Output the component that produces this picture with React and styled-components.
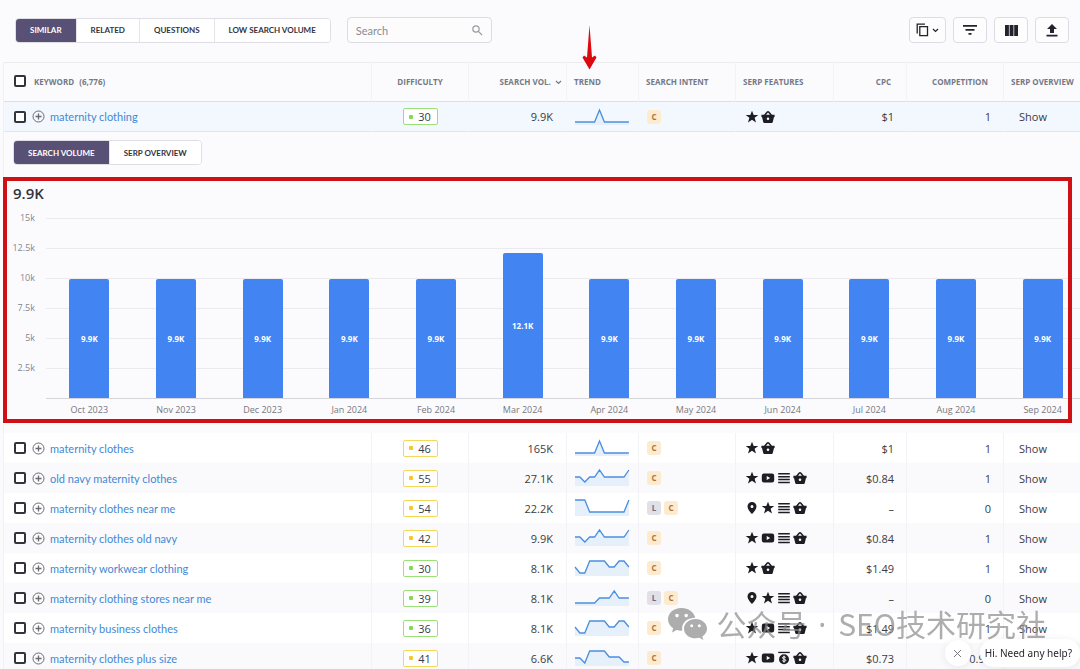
import React from "react";
import styled, { createGlobalStyle, css } from "styled-components";

const Global = createGlobalStyle`
  *, *::before, *::after { box-sizing: border-box; }
  body { margin: 0; background: #fbfbfd; color: #3b3b45; font-family: "Open Sans", "Noto Sans", sans-serif; font-size: 11px; }
  button, input { font: inherit; color: inherit; margin: 0; }
`;

const Page = styled.main`
  height: 100vh;
  overflow: hidden;
  padding-left: 3px;
`;

const Toolbar = styled.header`
  display: flex;
  align-items: center;
  gap: 16px;
  height: 62px;
  padding: 0 11px 2px 12px;
`;

const Segments = styled.div`
  display: flex;
  width: max-content;
  height: 25px;
  border: 1px solid #dedee4;
  border-radius: 4px;
  background: #fff;
  overflow: hidden;
`;

const Segment = styled.button`
  border: 0;
  border-right: 1px solid #e4e4ea;
  padding: 0 14px;
  background: ${(p) => (p.$active ? "#585075" : "#fff")};
  color: ${(p) => (p.$active ? "#fff" : "#33333d")};
  font-family: Lato, sans-serif;
  font-size: 8px;
  font-weight: 700;
  white-space: nowrap;
  &:last-child { border-right: 0; }
`;

const SearchBox = styled.label`
  display: flex;
  align-items: center;
  width: 145px;
  height: 26px;
  padding: 0 8px;
  border: 1px solid #dcdce2;
  border-radius: 4px;
  background: #fcfcfd;
  color: #9a9aa2;
  input {
    flex: 1;
    min-width: 0;
    border: 0;
    padding: 0;
    outline: 0;
    background: none;
    font-family: Lato, sans-serif;
    font-size: 11px;
  }
  input::placeholder { color: #8b8b93; opacity: 1; }
`;

const Tools = styled.div`
  display: flex;
  gap: 7px;
  margin-left: auto;
`;

const ToolButton = styled.button`
  display: flex;
  align-items: center;
  justify-content: center;
  gap: 3px;
  width: ${(p) => (p.$wide ? "37px" : "34px")};
  height: 26px;
  padding: 0;
  border: 1px solid #dcdce4;
  border-radius: 4px;
  background: #fdfdfe;
  color: #23232d;
`;

const Table = styled.table`
  width: calc(100% + 6px);
  table-layout: fixed;
  border-collapse: separate;
  border-spacing: 0;
  border-left: 1px solid #f1f1f5;
`;

const Th = styled.th`
  height: 40px;
  padding: 0 ${(p) => p.$right || 7}px 2px 7px;
  border-top: 1px solid #ebecf0;
  border-bottom: 1px solid #d3e2ee;
  border-right: 1px solid #f3f3f7;
  text-align: ${(p) => p.$align || "left"};
  color: #757987;
  font-size: 8px;
  font-weight: 700;
  white-space: nowrap;
`;

const Td = styled.td`
  height: 30px;
  padding: 0 ${(p) => p.$right || 7}px 0 ${(p) => p.$left || 7}px;
  border-right: 1px solid #f3f3f7;
  text-align: ${(p) => p.$align || "left"};
  white-space: nowrap;
`;

const Row = styled.tr`
  background: ${(p) => (p.$striped ? "#fafafc" : "#fff")};
  ${(p) =>
    p.$open &&
    css`
      background: #f2f8fe;
      td { border-right-color: transparent; border-bottom: 1px solid #dde8f2; }
    `}
`;

const KeywordLine = styled.div`
  display: flex;
  align-items: center;
  padding-left: 3px;
`;

const Check = styled.input.attrs({ type: "checkbox" })`
  appearance: none;
  flex: none;
  width: 12px;
  height: 12px;
  border: 2px solid #34343e;
  border-radius: 2px;
  background: #fff;
`;

const AddButton = styled.button`
  display: flex;
  margin: 0 5px 0 6px;
  padding: 0;
  border: 0;
  background: none;
  color: #6a6a72;
`;

const KeywordLink = styled.a`
  color: #4388d4;
  font-family: Lato, sans-serif;
  font-size: 11px;
  text-decoration: none;
`;

const HeadLabel = styled.label`
  margin-left: 8px;
  span { margin-left: 3px; }
`;

const Difficulty = styled.span`
  display: inline-flex;
  align-items: center;
  justify-content: center;
  gap: 5px;
  width: 35px;
  height: 17px;
  border: 1px solid ${(p) => (p.$hard ? "#f3d95a" : "#9ce079")};
  border-radius: 2px;
  background: #fff;
  vertical-align: middle;
  &::before {
    content: "";
    width: 4px;
    height: 4px;
    border-radius: 1px;
    background: ${(p) => (p.$hard ? "#f4c926" : "#82d957")};
  }
`;

const Badges = styled.div`
  display: flex;
  gap: 3px;
`;

const Intent = styled.span`
  width: 14px;
  height: 14px;
  border-radius: 3px;
  background: ${(p) => (p.$kind === "L" ? "#e0e0e8" : "#fdebd0")};
  color: ${(p) => (p.$kind === "L" ? "#6d6d80" : "#b0723c")};
  font-size: 8px;
  font-weight: 700;
  line-height: 14px;
  text-align: center;
`;

const Features = styled.div`
  display: flex;
  gap: 2px;
  color: #1d1d23;
`;

const ShowButton = styled.button`
  border: 0;
  padding: 0;
  background: none;
`;

const Details = styled.td`
  padding: 0;
`;

const DetailTabs = styled.div`
  padding: 8px 9px 12px;
`;

const ChartBlock = styled.section`
  position: relative;
  height: 256px;
`;

const Highlight = styled.div`
  position: absolute;
  inset: 0 14px 10px -1px;
  border: 4px solid #d01015;
`;

const ChartTitle = styled.h2`
  margin: 0;
  padding: 7px 9px 0;
  height: 41px;
  font-size: 15px;
  line-height: 19px;
  font-weight: 600;
  color: #33333b;
`;

const Plot = styled.div`
  display: grid;
  grid-template-columns: 31px 1fr;
  column-gap: 11px;
`;

const Scale = styled.div`
  display: grid;
  grid-template-rows: repeat(6, 30px);
  color: #85858d;
  font-size: 9px;
  line-height: 12px;
  text-align: right;
  span { margin-top: -6px; }
`;

const Field = styled.div`
  display: grid;
  grid-template-columns: repeat(12, 1fr);
  align-items: end;
  height: 181px;
  border-bottom: 1px solid #d5d5dc;
  background: repeating-linear-gradient(#ebebef 0 1px, transparent 1px 30px);
`;

const Bar = styled.div`
  display: flex;
  align-items: center;
  justify-content: center;
  justify-self: center;
  width: 40px;
  border-radius: 2px 2px 0 0;
  background: #4384f3;
  color: #fff;
  font-size: 8px;
  font-weight: 700;
`;

const Months = styled.div`
  grid-column: 2;
  display: grid;
  grid-template-columns: repeat(12, 1fr);
  padding-top: 5px;
  color: #777780;
  font-size: 9px;
  line-height: 12px;
  text-align: center;
`;

const PointerArrow = styled.svg`
  position: fixed;
  left: 582px;
  top: 25px;
`;

const Watermark = styled.div`
  position: fixed;
  right: 34px;
  bottom: 22px;
  display: flex;
  align-items: center;
  gap: 8px;
  color: #8a8a8a;
  opacity: 0.7;
  font-family: "Noto Sans CJK SC", sans-serif;
  font-size: 30px;
  line-height: 44px;
  white-space: nowrap;
  pointer-events: none;
  b { padding: 0 4px; font-family: "Noto Sans", sans-serif; font-weight: 400; }
`;

const Help = styled.aside`
  position: fixed;
  right: 0;
  bottom: 2px;
  display: flex;
  align-items: center;
  gap: 9px;
`;

const HelpClose = styled.button`
  display: grid;
  place-items: center;
  width: 26px;
  height: 26px;
  padding: 0;
  border: 0;
  border-radius: 50%;
  background: #fff;
  color: #77777f;
  box-shadow: 0 1px 8px rgba(0, 0, 0, 0.08);
`;

const HelpText = styled.button`
  height: 28px;
  padding: 0 8px 0 5px;
  border: 0;
  border-radius: 14px;
  background: #fff;
  color: #26262e;
  font-family: "Noto Sans", sans-serif;
  font-size: 10px;
  box-shadow: 0 1px 8px rgba(0, 0, 0, 0.08);
`;

const icons = {
  star: <path d="M7 .8 8.7 5h4.6L9.6 7.8 11 12.4 7 9.7 3 12.4l1.4-4.6L.7 5h4.6z" />,
  basket: (
    <path
      fillRule="evenodd"
      d="M.4 4.800h2.600L5.800 1.400c.6-.7 1.800-.7 2.400 0L11 4.800h2.600v2.200H13l-1.300 5.200c-.1.500-.5.800-1 .8H3.300c-.5 0-.9-.3-1-.8L1 7H.4zM5 4.800h4L7 2.600zM7 7.500a1.300 1.300 0 1 0 0 2.600 1.300 1.300 0 0 0 0-2.600z"
    />
  ),
  video: <path fillRule="evenodd" d="M3 2.500h8q2.200 0 2.200 2.200v4.600q0 2.200-2.200 2.200H3q-2.200 0-2.200-2.200V4.700q0-2.200 2.200-2.200zM5.700 5v4L9.200 7z" />,
  list: <path d="M1.200 2h11.600v1.500H1.200zm0 2.900h11.600v1.500H1.200zm0 2.900h11.600v1.500H1.200zm0 2.900h11.600v1.500H1.200z" />,
  pin: <path fillRule="evenodd" d="M7 1a4.500 4.500 0 0 0-4.500 4.500C2.500 8.800 7 13 7 13s4.500-4.200 4.500-7.500A4.500 4.500 0 0 0 7 1zm0 3a1.500 1.500 0 1 1 0 3 1.500 1.500 0 0 1 0-3z" />,
  ads: (
    <>
      <path d="M1.200.8h11.600v1.300H1.200z" />
      <circle cx="7" cy="8.200" r="5" />
      <path d="M8.800 6.600c-.4-1-3.400-1.200-3.400.2 0 1.500 3.400.9 3.400 2.500 0 1.500-3.200 1.300-3.600.1M7 4.700v7" fill="none" stroke="#fff" />
    </>
  ),
};

const Feature = ({ name }) => (
  <svg width="14" height="14" viewBox="0 0 14 14" fill="currentColor" role="img" aria-label={name}>
    {icons[name]}
  </svg>
);

const Chevron = () => (
  <svg width="7" height="5" viewBox="0 0 7 5" fill="none" stroke="currentColor" strokeWidth="1.200">
    <path d="M1 1l2.500 2.500L6 1" />
  </svg>
);

const TrendChart = styled.svg`
  display: block;
`;

const Trend = ({ values }) => {
  const points = values.map((v, i) => `${1 + i * 4.9},${v}`).join(" ");
  return (
    <TrendChart width="57" height="20" viewBox="0 0 57 20">
      <polygon points={`1,18 ${points} 54.9,18`} fill="#e5f0fb" />
      <polyline points={points} fill="none" stroke="#4b8ede" strokeWidth="1.300" />
    </TrendChart>
  );
};

const spike = [15, 15, 15, 15, 15, 3, 15, 15, 15, 15, 15, 15];
const navy = [9, 9, 14, 9, 9, 2, 9, 9, 9, 9, 9, 2];
const hills = [9, 15, 15, 3, 3, 3, 3, 9, 9, 3, 3, 9];

const rows = [
  { keyword: "maternity clothes", kd: 46, volume: "165K", trend: spike, intent: "C", features: ["star", "basket"], cpc: "$1", comp: "1" },
  { keyword: "old navy maternity clothes", kd: 55, volume: "27.1K", trend: navy, intent: "C", features: ["star", "video", "list", "basket"], cpc: "$0.84", comp: "1" },
  { keyword: "maternity clothes near me", kd: 54, volume: "22.2K", trend: [2, 2, 2, 14, 14, 14, 14, 14, 14, 14, 14, 2], intent: "LC", features: ["pin", "star", "list", "basket"], cpc: "–", comp: "0" },
  { keyword: "maternity clothes old navy", kd: 42, volume: "9.9K", trend: navy, intent: "C", features: ["star", "video", "list", "basket"], cpc: "$0.84", comp: "1" },
  { keyword: "maternity workwear clothing", kd: 30, volume: "8.1K", trend: hills, intent: "C", features: ["star", "basket"], cpc: "$1.49", comp: "1" },
  { keyword: "maternity clothing stores near me", kd: 39, volume: "8.1K", trend: [15, 15, 15, 15, 15, 10, 10, 10, 3, 10, 10, 10], intent: "LC", features: ["pin", "star", "list", "basket"], cpc: "–", comp: "0" },
  { keyword: "maternity business clothes", kd: 36, volume: "8.1K", trend: hills, intent: "C", features: ["star", "video", "list", "basket"], cpc: "$1.49", comp: "1" },
  { keyword: "maternity clothes plus size", kd: 41, volume: "6.6K", trend: [10, 10, 15, 3, 3, 3, 3, 9, 9, 9, 14, 14], intent: "C", features: ["star", "video", "ads", "basket"], cpc: "$0.73", comp: "0.99" },
];

const openRow = { keyword: "maternity clothing", kd: 30, volume: "9.9K", trend: spike, intent: "C", features: ["star", "basket"], cpc: "$1", comp: "1" };

const months = ["Oct 2023", "Nov 2023", "Dec 2023", "Jan 2024", "Feb 2024", "Mar 2024", "Apr 2024", "May 2024", "Jun 2024", "Jul 2024", "Aug 2024", "Sep 2024"];
const volumes = months.map((m) => (m === "Mar 2024" ? 12.1 : 9.9));

function KeywordRow({ row, open, striped }) {
  return (
    <Row $open={open} $striped={striped}>
      <Td>
        <KeywordLine>
          <Check aria-label={`Select ${row.keyword}`} />
          <AddButton aria-label={`Add ${row.keyword}`}>
            <svg width="13" height="13" viewBox="0 0 13 13" fill="none" stroke="currentColor">
              <circle cx="6.500" cy="6.500" r="5.500" />
              <path d="M6.500 3.500v6M3.500 6.500h6" strokeWidth="1.300" />
            </svg>
          </AddButton>
          <KeywordLink href="#">{row.keyword}</KeywordLink>
        </KeywordLine>
      </Td>
      <Td $align="center"><Difficulty $hard={row.kd > 40}>{row.kd}</Difficulty></Td>
      <Td $align="right" $right={13}>{row.volume}</Td>
      <Td><Trend values={row.trend} /></Td>
      <Td $left={8}>
        <Badges>
          {row.intent.split("").map((k) => <Intent key={k} $kind={k}>{k}</Intent>)}
        </Badges>
      </Td>
      <Td $left={9}>
        <Features>{row.features.map((f) => <Feature key={f} name={f} />)}</Features>
      </Td>
      <Td $align="right" $right={12}>{row.cpc}</Td>
      <Td $align="right" $right={12}>{row.comp}</Td>
      <Td $left={15}><ShowButton>Show</ShowButton></Td>
    </Row>
  );
}

export default function App() {
  return (
    <Page>
      <Global />
      <Toolbar>
        <Segments>
          <Segment $active>SIMILAR</Segment>
          <Segment>RELATED</Segment>
          <Segment>QUESTIONS</Segment>
          <Segment>LOW SEARCH VOLUME</Segment>
        </Segments>
        <SearchBox>
          <input type="text" placeholder="Search" aria-label="Search" />
          <svg width="11" height="11" viewBox="0 0 11 11" fill="none" stroke="currentColor" strokeWidth="1.200">
            <circle cx="4" cy="4" r="3.200" />
            <path d="M6.400 6.400 10 10" />
          </svg>
        </SearchBox>
        <Tools>
          <ToolButton $wide aria-label="Copy">
            <svg width="13" height="14" viewBox="0 0 13 14" fill="none" stroke="currentColor" strokeWidth="1.300">
              <path d="M1.200 10.500V1.200H9" />
              <path d="M3.800 3.700h7.700v9H3.800z" />
            </svg>
            <Chevron />
          </ToolButton>
          <ToolButton aria-label="Filter">
            <svg width="14" height="10" viewBox="0 0 14 10" fill="currentColor">
              <path d="M0 0h14v1.700H0zM2.500 4h9v1.700h-9zM5.500 8h3v1.700h-3z" />
            </svg>
          </ToolButton>
          <ToolButton aria-label="Columns">
            <svg width="13" height="11" viewBox="0 0 13 11" fill="currentColor">
              <path d="M0 0h3.900v11H0zM4.600 0h3.900v11H4.600zM9.200 0H13v11H9.200z" />
            </svg>
          </ToolButton>
          <ToolButton aria-label="Export">
            <svg width="12" height="13" viewBox="0 0 12 13" fill="currentColor">
              <path d="M6 0l5 5H8v4H4V5H1zM.5 10.800h11v1.700H.5z" />
            </svg>
          </ToolButton>
        </Tools>
      </Toolbar>

      <Table>
        <colgroup>
          <col />
          <col width="97" />
          <col width="98" />
          <col width="72" />
          <col width="97" />
          <col width="98" />
          <col width="73" />
          <col width="97" />
          <col width="82" />
        </colgroup>
        <thead>
          <tr>
            <Th>
              <KeywordLine>
                <Check id="all" />
                <HeadLabel htmlFor="all">KEYWORD <span>(6,776)</span></HeadLabel>
              </KeywordLine>
            </Th>
            <Th $align="center">DIFFICULTY</Th>
            <Th $align="right" $right={4}>SEARCH VOL. &nbsp;<Chevron /></Th>
            <Th>TREND</Th>
            <Th>SEARCH INTENT</Th>
            <Th>SERP FEATURES</Th>
            <Th $align="right" $right={15}>CPC</Th>
            <Th $align="right" $right={15}>COMPETITION</Th>
            <Th>SERP OVERVIEW</Th>
          </tr>
        </thead>
        <tbody>
          <KeywordRow row={openRow} open />
          <tr>
            <Details colSpan={9}>
              <DetailTabs>
                <Segments>
                  <Segment $active>SEARCH VOLUME</Segment>
                  <Segment>SERP OVERVIEW</Segment>
                </Segments>
              </DetailTabs>
              <ChartBlock>
                <ChartTitle>9.9K</ChartTitle>
                <Plot>
                  <Scale>
                    {["15k", "12.5k", "10k", "7.5k", "5k", "2.5k"].map((t) => <span key={t}>{t}</span>)}
                  </Scale>
                  <Field>
                    {volumes.map((v, i) => (
                      <Bar key={months[i]} style={{ height: Math.round(v * 12) }}>{v}K</Bar>
                    ))}
                  </Field>
                  <Months>{months.map((m) => <span key={m}>{m}</span>)}</Months>
                </Plot>
                <Highlight />
              </ChartBlock>
            </Details>
          </tr>
          {rows.map((row, i) => <KeywordRow key={row.keyword} row={row} striped={i % 2 === 1} />)}
        </tbody>
      </Table>

      <PointerArrow width="15" height="45" viewBox="0 0 15 45" fill="#dc0a0f" aria-hidden="true">
        <path d="M7.500 0 10 32.500 13 30.500 14.500 32.500 7.500 44.500.5 32.500 2 30.500 5 32.500z" />
      </PointerArrow>

      <Watermark>
        <svg width="42" height="34" viewBox="0 0 42 34" fill="currentColor" aria-hidden="true">
          <path
            fillRule="evenodd"
            d="M14.500 1C6.500 1 1 6 1 12.300c0 3.700 2 6.800 5.200 8.900L5 25.500l4.800-2.500c1.800.5 3.400.7 5.500.6C14 16 20 10.800 28.300 10.800 27 5 21.300 1 14.500 1zM10 6.800a1.800 1.800 0 1 1 0 3.600 1.800 1.800 0 0 1 0-3.600zm9.200 0a1.800 1.800 0 1 1 0 3.600 1.800 1.800 0 0 1 0-3.600z"
          />
          <path
            fillRule="evenodd"
            d="M28.500 12C21.800 12 17 16.500 17 21.700s4.800 9.600 11.500 9.600c1.400 0 2.600-.2 3.900-.5l4 2.200-1.100-3.600c2.900-1.900 4.700-4.600 4.700-7.700 0-5.200-4.900-9.700-11.500-9.700zm-3.800 5.200a1.500 1.500 0 1 1 0 3 1.500 1.500 0 0 1 0-3zm7.600 0a1.500 1.500 0 1 1 0 3 1.500 1.500 0 0 1 0-3z"
          />
        </svg>
        <span>公众号<b> · </b>SEO技术研究社</span>
      </Watermark>

      <Help>
        <HelpClose aria-label="Close">
          <svg width="9" height="9" viewBox="0 0 9 9" fill="none" stroke="currentColor">
            <path d="M1 1l7 7M8 1 1 8" />
          </svg>
        </HelpClose>
        <HelpText>Hi. Need any help?</HelpText>
      </Help>
    </Page>
  );
}
